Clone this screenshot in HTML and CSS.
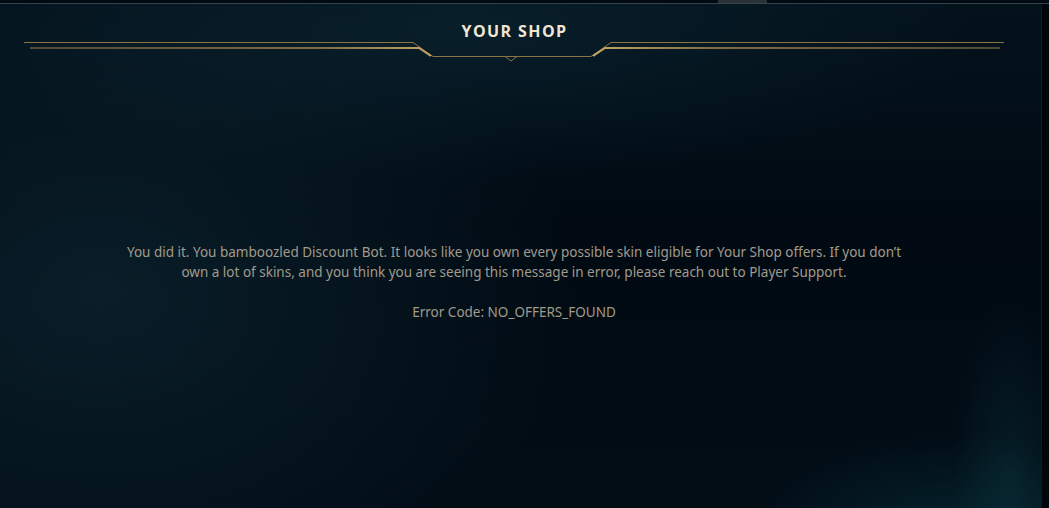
FILE: index.html
```html
<!DOCTYPE html>
<html lang="en">
<head>
<meta charset="UTF-8">
<title>Your Shop</title>
<link rel="stylesheet" href="styles.css">
</head>
<body>
<div class="screen">
    <div class="topbar">
        <div class="tab"></div>
    </div>
    <div class="layout">
        <div class="main">
            <div class="header">
                <h1 class="title">YOUR SHOP</h1>
                <svg class="frame" viewBox="0 0 1028 24" width="1028" height="24">
                    <defs>
                        <linearGradient id="gold" x1="0" x2="1" y1="0" y2="0">
                            <stop offset="0" stop-color="#4f4a36"/>
                            <stop offset="0.3" stop-color="#7f6d44"/>
                            <stop offset="0.42" stop-color="#c8a865"/>
                            <stop offset="0.58" stop-color="#c8a865"/>
                            <stop offset="0.7" stop-color="#7f6d44"/>
                            <stop offset="1" stop-color="#4f4a36"/>
                        </linearGradient>
                    </defs>
                    <path d="M24 2.5 H413 L433 16.5 H591 L611 2.5 H1004" fill="none" stroke="#8a7443" stroke-width="1"/>
                    <path d="M30 8 H419 L431 16 M593 16 L605 8 H1000" fill="none" stroke="url(#gold)" stroke-width="2"/>
                    <path d="M505 16.5 L511 21 L517 16.5" fill="none" stroke="#8a7340" stroke-width="1"/>
                </svg>
            </div>
            <div class="message">
                <p>You did it. You bamboozled Discount Bot. It looks like you own every possible skin eligible for Your Shop offers. If you don’t<br>own a lot of skins, and you think you are seeing this message in error, please reach out to Player Support.</p>
                <p class="code">Error Code: NO_OFFERS_FOUND</p>
            </div>
        </div>
        <div class="gutter">
            <div class="edge"></div>
        </div>
    </div>
</div>
</body>
</html>
```

FILE: styles.css
```css
html, body {
    margin: 0;
    padding: 0;
    height: 100%;
    overflow: hidden;
}
body {
    background-color: #010a13;
    font-family: "Noto Sans", sans-serif;
}
.screen {
    height: 508px;
    display: flex;
    flex-direction: column;
    background:
        radial-gradient(ellipse 200px 90px at 950px 525px, rgba(12, 85, 95, 0.28), transparent),
        radial-gradient(ellipse 60px 180px at 1010px 480px, rgba(20, 90, 100, 0.22), transparent),
        radial-gradient(ellipse 480px 330px at 100px 290px, rgba(16, 46, 58, 0.55), transparent),
        radial-gradient(ellipse 520px 150px at 460px 30px, rgba(12, 44, 56, 0.5), transparent),
        linear-gradient(180deg, #04121c 0%, #010a13 45%, #020d16 100%);
}
.topbar {
    display: flex;
    height: 3px;
    border-bottom: 1px solid #34434a;
    background-color: #010a13;
}
.tab {
    width: 49px;
    height: 3px;
    margin-left: 718px;
    background-color: #2a3237;
}
.layout {
    flex: 1;
    display: flex;
}
.main {
    flex: 1;
}
.gutter {
    width: 21px;
    display: flex;
    justify-content: flex-end;
}
.edge {
    width: 7px;
    border-left: 1px solid #0c1a22;
    background-color: #01060b;
}
.header {
    display: flex;
    flex-direction: column;
    align-items: center;
}
.title {
    margin: 19px 0 0;
    height: 17px;
    font-family: "Open Sans", sans-serif;
    font-size: 16px;
    font-weight: 700;
    line-height: 17px;
    letter-spacing: 1.4px;
    color: #f0e6d2;
    padding-left: 1px;
}
.frame {
    display: block;
}
.message {
    margin-top: 178px;
    text-align: center;
    color: #a09b8c;
    font-size: 13.5px;
    line-height: 20px;
}
.message p {
    margin: 0;
}
.message .code {
    margin-top: 20px;
}
```
